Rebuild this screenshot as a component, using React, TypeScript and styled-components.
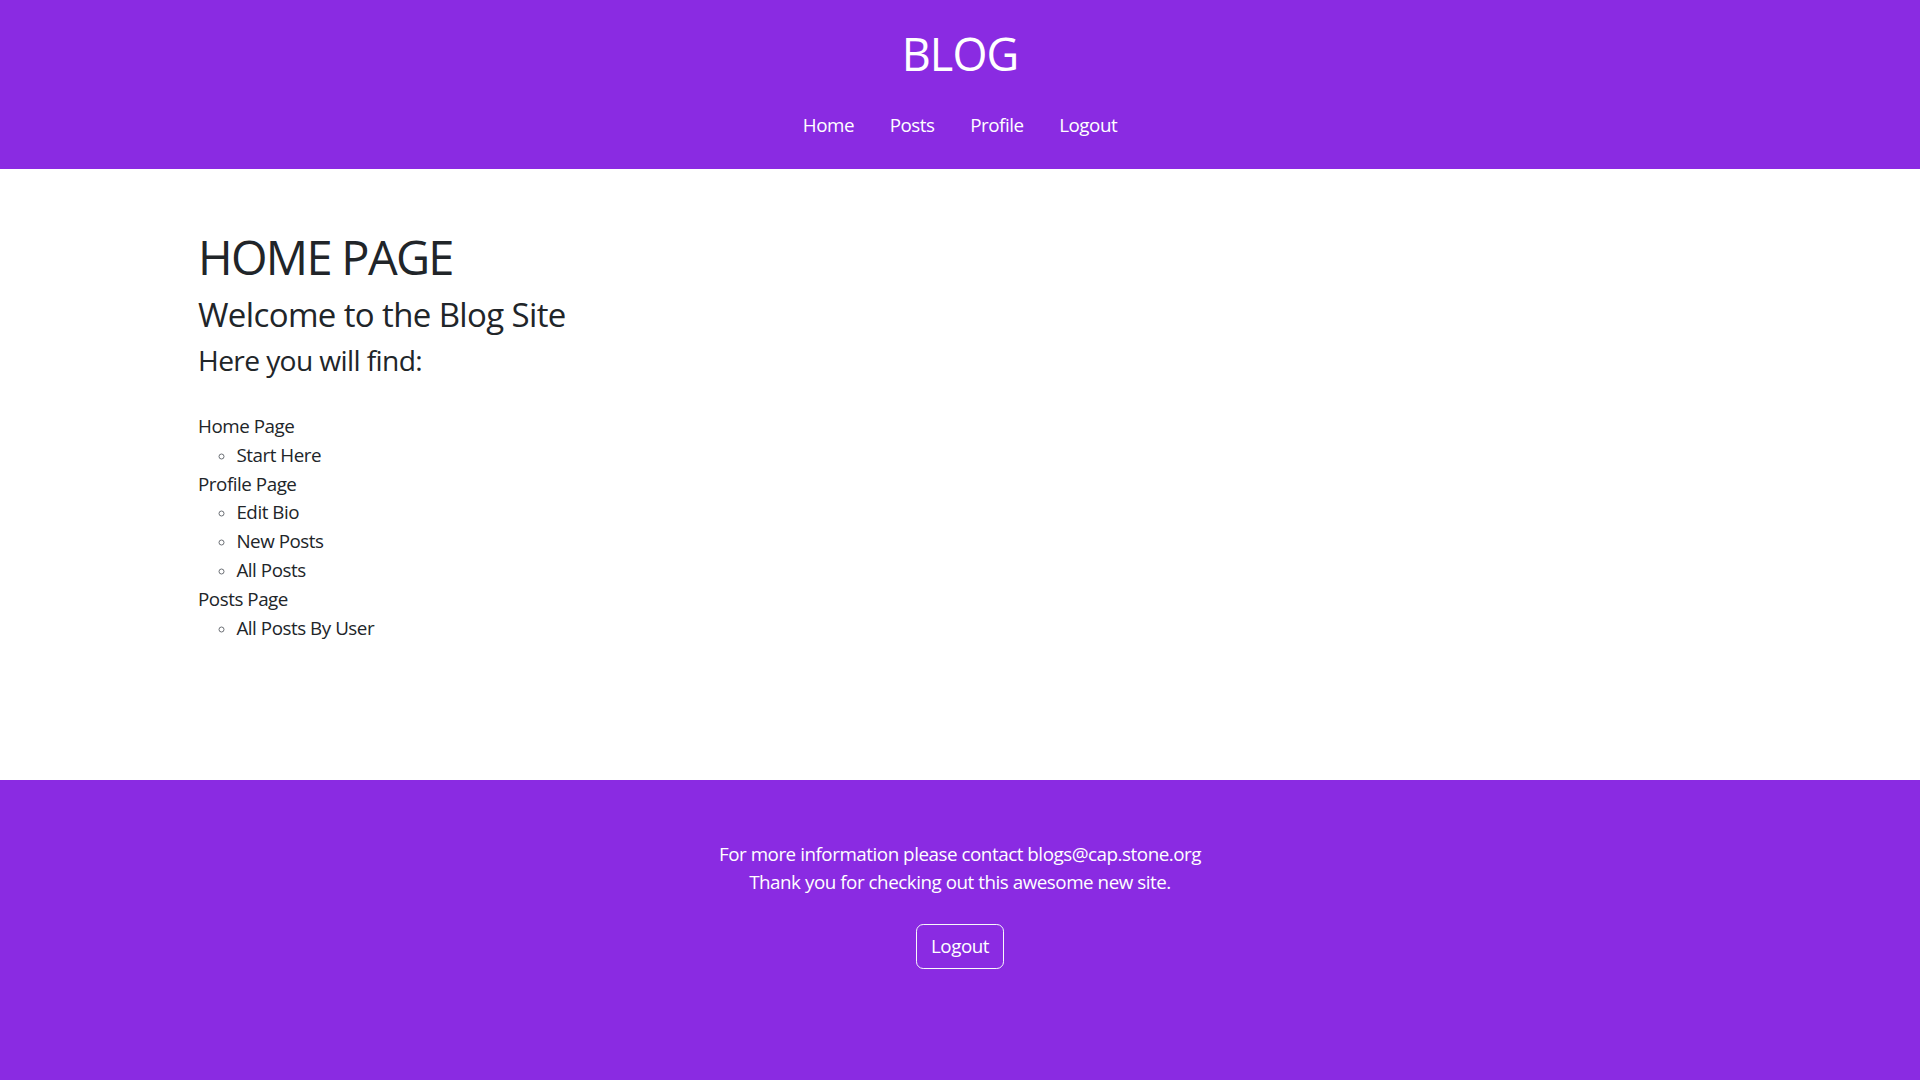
import React from "react";
import styled, { createGlobalStyle } from "styled-components";

const GlobalStyle = createGlobalStyle`
  html, body {
    margin: 0;
    padding: 0;
  }
  body {
    font-family: "Open Sans", "Noto Sans", "Liberation Sans", sans-serif;
    font-size: 18.8px;
    line-height: 1.5;
    letter-spacing: -0.46px;
    color: #212529;
    background: #ffffff;
  }
  * { box-sizing: border-box; }
`;

const Page = styled.div`
  min-height: 100vh;
  display: flex;
  flex-direction: column;
`;

const Header = styled.header`
  background: #8a2be2;
  color: #ffffff;
  height: 169px;
  display: flex;
  flex-direction: column;
  align-items: center;
  padding-top: 27px;
`;

const SiteTitle = styled.h1`
  margin: 0;
  font-size: 45px;
  font-weight: 400;
  line-height: 1.2;
  letter-spacing: -0.9px;
`;

const Nav = styled.nav`
  display: flex;
  justify-content: center;
  margin-top: 20px;
`;

const NavLink = styled.a`
  display: block;
  padding: 9.6px 17.8px;
  color: #ffffff;
  text-decoration: none;
  font-size: 18.8px;
  line-height: 1.5;
  cursor: pointer;
`;

const Main = styled.main`
  flex: 1;
  padding: 60px 0 0 198px;
`;

const Heading = styled.h1<{ $size: number; $track: number }>`
  margin: 0 0 8px 0;
  font-weight: 400;
  font-size: ${(p) => p.$size}px;
  line-height: ${(p) => p.$size * 1.2 * 1.02}px;
  letter-spacing: ${(p) => p.$track}px;
`;

const TopList = styled.ul`
  list-style: none;
  margin: 34.6px 0 0 0;
  padding: 0;
`;

const SubList = styled.ul`
  list-style: circle;
  margin: 0;
  padding-left: 38.4px;

  li::marker {
    font-size: 14px;
    color: #6c6f75;
  }
`;

const Item = styled.li`
  line-height: 28.8px;
`;

const Footer = styled.footer`
  background: #8a2be2;
  color: #ffffff;
  min-height: 300px;
  display: flex;
  flex-direction: column;
  align-items: center;
  padding-top: 60px;
  text-align: center;
`;

const FooterText = styled.p`
  margin: 0;
  line-height: 28.4px;
`;

const OutlineButton = styled.button`
  margin-top: 27px;
  font-family: inherit;
  font-size: 18.8px;
  line-height: 28.8px;
  letter-spacing: -0.46px;
  color: #ffffff;
  background: transparent;
  border: 1px solid #f8f9fa;
  border-radius: 7.2px;
  padding: 7px 14.4px;
  cursor: pointer;
`;

const sections = [
  { title: "Home Page", items: ["Start Here"] },
  { title: "Profile Page", items: ["Edit Bio", "New Posts", "All Posts"] },
  { title: "Posts Page", items: ["All Posts By User"] },
];

export default function App() {
  return (
    <Page>
      <GlobalStyle />
      <Header>
        <SiteTitle>BLOG</SiteTitle>
        <Nav>
          <NavLink>Home</NavLink>
          <NavLink>Posts</NavLink>
          <NavLink>Profile</NavLink>
          <NavLink>Logout</NavLink>
        </Nav>
      </Header>
      <Main>
        <Heading as="h1" $size={47} $track={-1.7}>HOME PAGE</Heading>
        <Heading as="h3" $size={33} $track={-0.62}>Welcome to the Blog Site</Heading>
        <Heading as="h4" $size={28.2} $track={-0.63}>Here you will find:</Heading>
        <TopList>
          {sections.map((s) => (
            <React.Fragment key={s.title}>
              <Item>{s.title}</Item>
              <SubList>
                {s.items.map((i) => (
                  <Item key={i}>{i}</Item>
                ))}
              </SubList>
            </React.Fragment>
          ))}
        </TopList>
      </Main>
      <Footer>
        <FooterText>For more information please contact blogs@cap.stone.org</FooterText>
        <FooterText>Thank you for checking out this awesome new site.</FooterText>
        <OutlineButton>Logout</OutlineButton>
      </Footer>
    </Page>
  );
}
